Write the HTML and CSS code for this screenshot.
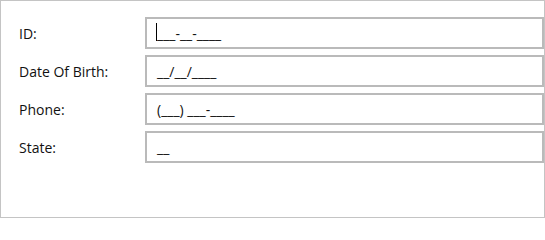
FILE: index.html
```html
<!DOCTYPE html>
<html>
<head>
<meta charset="utf-8">
<link rel="stylesheet" href="styles.css">
</head>
<body>
<div class="frame">
  <div class="form">
    <label class="label">ID:</label>
    <div class="field"><span class="caret"></span><span class="mask">___-__-____</span></div>
    <label class="label">Date Of Birth:</label>
    <div class="field"><span class="mask">__/__/____</span></div>
    <label class="label">Phone:</label>
    <div class="field"><span class="mask">(___) ___-____</span></div>
    <label class="label">State:</label>
    <div class="field"><span class="mask">__</span></div>
  </div>
</div>
</body>
</html>
```
FILE: styles.css
```css
html, body {
  margin: 0;
  padding: 0;
  background: #ffffff;
}
.frame {
  box-sizing: border-box;
  width: 545px;
  height: 218px;
  border: 1px solid #c4c4c4;
  padding: 16px 0 0 18px;
  font-family: "Open Sans", "Noto Sans", sans-serif;
  font-size: 14px;
  color: #111111;
}
.form {
  display: grid;
  grid-template-columns: 126px 399px;
  row-gap: 6px;
}
.label {
  display: flex;
  align-items: center;
  height: 32px;
  padding-top: 1px;
  box-sizing: border-box;
}
.field {
  box-sizing: border-box;
  height: 32px;
  border: 2px solid #bababa;
  display: flex;
  align-items: center;
  padding: 1px 0 0 10px;
  position: relative;
}
.mask {
  white-space: pre;
  color: #111111;
}
.caret {
  position: absolute;
  left: 9px;
  top: 4px;
  width: 1px;
  height: 18px;
  background: #000000;
}
```
